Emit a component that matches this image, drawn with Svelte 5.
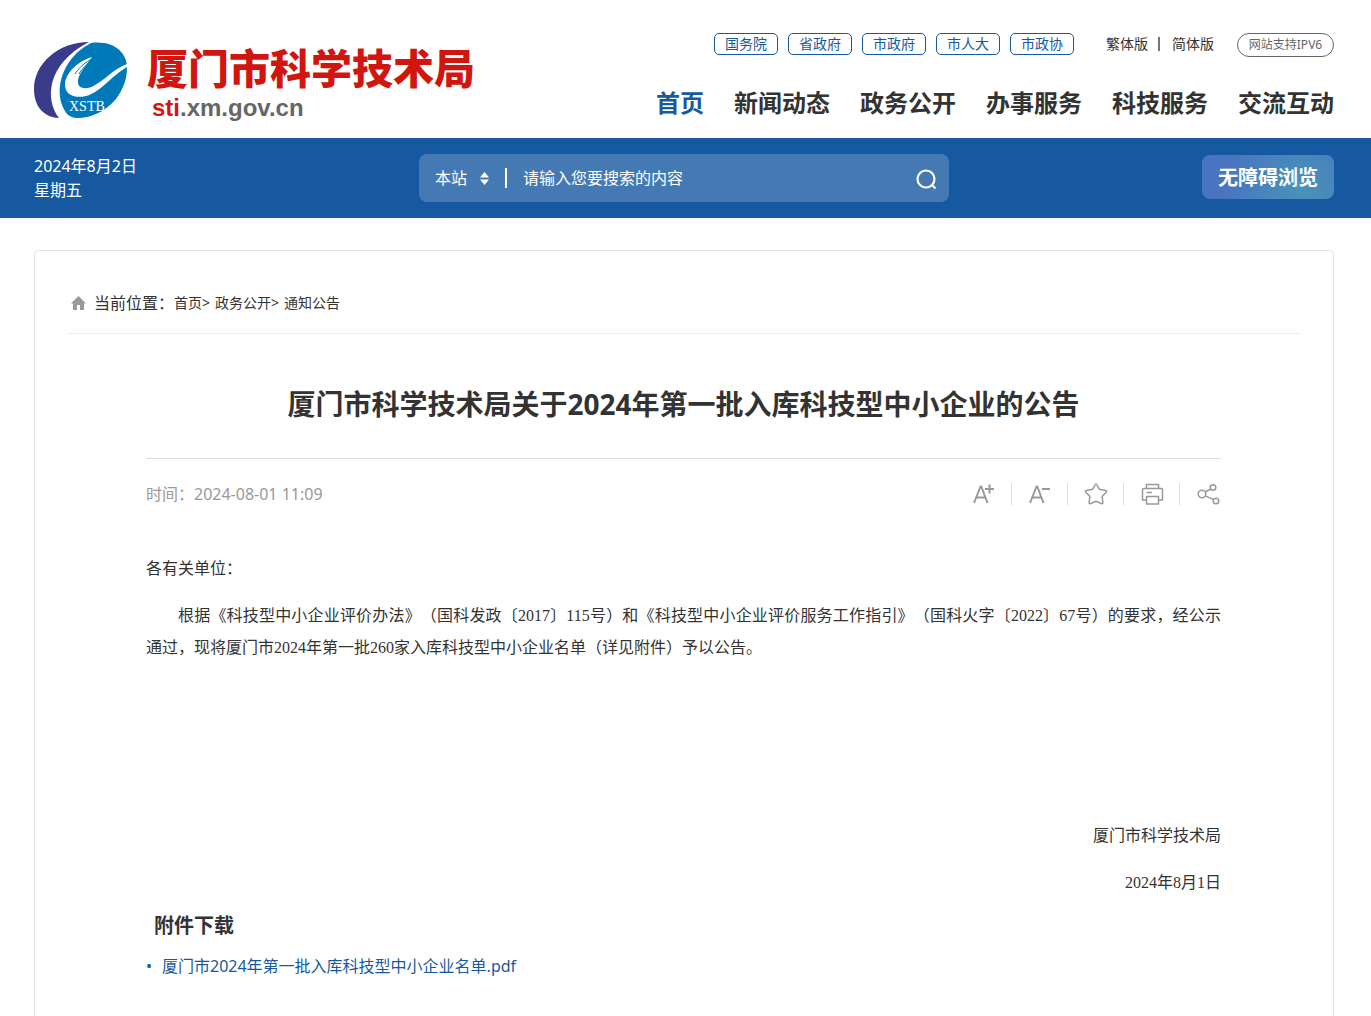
<script>
  const topLinks = ['国务院', '省政府', '市政府', '市人大', '市政协']
  const nav = ['首页', '新闻动态', '政务公开', '办事服务', '科技服务', '交流互动']
  const crumbs = ['首页', '政务公开', '通知公告']

  let keyword = $state('')
</script>

<header class="wrap header">
  <a class="logo" href="#home">
    <svg width="94" height="78" viewBox="0 0 94 78" aria-hidden="true">
      <path fill="#3b3b8c" d="M55 0C24 0 0 22 0 47c0 17 9 28 25 29C11 58 12 22 55 0z" />
      <path fill="#0079b8" d="M57 1c22-3 36 9 36 25 0 26-22 50-50 50-4 0-8-2-10-4C18 53 26 17 57 1z" />
      <path fill="#fff" d="M58 15C42 20 31 32 31 43c0 9 9 14 21 11 15-4 24-19 41-29v-3C79 27 71 38 61 43c-8 5-16 4-17-2-1-7 6-15 14-26z" />
      <path stroke="#0079b8" stroke-width="1" fill="none" d="M56 18C49 22 44 27 41 32M55 21C50 25 47 28 45 32" />
      <text x="35" y="69">XSTB</text>
    </svg>
    <span class="logo-text">
      <strong>厦门市科学技术局</strong>
      <em><b>sti</b>.xm.gov.cn</em>
    </span>
  </a>

  <div class="header-right">
    <div class="top">
      {#each topLinks as item}
        <a class="tag" href="#gov">{item}</a>
      {/each}
      <div class="lang">
        <a href="#hant">繁体版</a>
        <i></i>
        <a href="#hans">简体版</a>
      </div>
      <a class="ipv6" href="#ipv6">网站支持IPV6</a>
    </div>
    <nav>
      {#each nav as item, i}
        <a class:on={i === 0} href="#nav">{item}</a>
      {/each}
    </nav>
  </div>
</header>

<div class="bar">
  <div class="wrap bar-in">
    <p class="date">2024年8月2日<br />星期五</p>
    <form class="search" onsubmit={(e) => e.preventDefault()}>
      <select aria-label="搜索范围">
        <option>本站</option>
      </select>
      <svg class="arrows" width="9" height="13" viewBox="0 0 9 13" aria-hidden="true">
        <path fill="#fff" d="M4.5 0L9 5.500H0zM4.500 13L9 7.500H0z" />
      </svg>
      <i></i>
      <input type="text" aria-label="搜索" placeholder="请输入您要搜索的内容" bind:value={keyword} />
      <button aria-label="搜索">
        <svg width="22" height="24" viewBox="0 0 22 24" fill="none" stroke="#fff" stroke-width="2.2">
          <circle cx="11" cy="13" r="8.500" />
          <path d="M16.500 18.500l4 4" />
        </svg>
      </button>
    </form>
    <button class="barrier">无障碍浏览</button>
  </div>
</div>

<div class="wrap">
  <main class="card">
    <div class="crumbs">
      <svg width="15" height="14" viewBox="0 0 15 14" aria-hidden="true">
        <path fill="#999" d="M7.5 0L15 7.500h-2V14H9V9H6v5H2V7.500H0z" />
      </svg>
      <span>当前位置：</span>
      <p>
        {#each crumbs as item, i}
          <span><a href="#crumb">{item}</a>{i < crumbs.length - 1 ? '>' : ''}</span>
        {/each}
      </p>
    </div>

    <article>
      <h1>厦门市科学技术局关于2024年第一批入库科技型中小企业的公告</h1>
      <div class="meta">
        <span>时间：2024-08-01 11:09</span>
        <div class="tools">
          <button aria-label="放大字体">
            <svg viewBox="0 0 24 22"><path class="thick" d="M2 20L8.500 3.500h.8L15.500 20M4.500 14.500H13M13 6h9M17.500 1.500v9" /></svg>
          </button>
          <button aria-label="缩小字体">
            <svg viewBox="0 0 24 22"><path class="thick" d="M2 20L8.500 3.500h.8L15.500 20M4.500 14.500H13M14 6h8" /></svg>
          </button>
          <button aria-label="收藏">
            <svg viewBox="0 0 24 22"><path d="M12 1c.5 0 1 .6 3.300 5.300l6.500 1.200c1 .2 1 .9.500 1.500l-4.200 4.500.8 6.300c0 .8-.6 1.100-1.300.8L12 18.200l-5.600 2.400c-.7.300-1.300 0-1.300-.8l.8-6.300L1.700 9c-.5-.6-.5-1.300.5-1.500l6.500-1.200C11 1.600 11.500 1 12 1z" /></svg>
          </button>
          <button aria-label="打印">
            <svg viewBox="0 0 24 22"><path d="M6.500 5.500V1.500h12v4M6.500 17H2.500V7q0-1.500 1.500-1.500h17q1.500 0 1.500 1.500v10h-4M6.500 13.500h12V21h-12zM6.500 9.500H12" /></svg>
          </button>
          <button aria-label="分享">
            <svg viewBox="0 0 24 22"><circle cx="6" cy="11" r="3.800" /><circle cx="17" cy="4.500" r="2.800" /><circle cx="20" cy="18" r="2.800" /><path d="M9.300 9L14.500 6M9.500 12.800l8 3.900" /></svg>
          </button>
        </div>
      </div>

      <div class="text">
        <p>各有关单位：</p>
        <p class="indent">根据《科技型中小企业评价办法》（国科发政〔2017〕115号）和《科技型中小企业评价服务工作指引》（国科火字〔2022〕67号）的要求，经公示通过，现将厦门市2024年第一批260家入库科技型中小企业名单（详见附件）予以公告。</p>
        <div class="sign">
          <p>厦门市科学技术局</p>
          <p>2024年8月1日</p>
        </div>
      </div>

      <h2>附件下载</h2>
      <ul>
        <li><a href="#pdf">厦门市2024年第一批入库科技型中小企业名单.pdf</a></li>
      </ul>
    </article>
  </main>
</div>

<style>
  :global(body) {
    margin: 0;
    background: #fff;
    color: #333;
    font-family: "Noto Sans", "Noto Sans CJK SC", sans-serif;
    font-size: 16px;
    line-height: 24px;
  }
  a {
    color: inherit;
    text-decoration: none;
  }
  p, h1, h2, ul {
    margin: 0;
    padding: 0;
  }
  button, input, select {
    font: inherit;
    color: inherit;
    background: none;
    border: 0;
    padding: 0;
    margin: 0;
  }
  button {
    cursor: pointer;
  }

  .wrap {
    max-width: 1300px;
    margin: 0 auto;
    padding: 0 37px 0 34px;
  }
  .header {
    display: flex;
    justify-content: space-between;
    height: 138px;
  }
  .logo {
    display: flex;
    gap: 19px;
    padding-top: 42px;
  }
  .logo text {
    fill: #fff;
    font: 14px "Liberation Serif", serif;
  }
  .logo-text {
    display: flex;
    flex-direction: column;
  }
  .logo-text strong {
    color: #d1160f;
    font-size: 41px;
    font-weight: 900;
    line-height: 52px;
  }
  .logo-text em {
    padding-left: 5px;
    color: #666;
    font: bold 24px/28px "Liberation Sans", sans-serif;
  }
  .logo-text b {
    color: #d1160f;
  }

  .header-right {
    display: flex;
    flex-direction: column;
    align-items: flex-end;
    padding-top: 33px;
  }
  .top {
    display: flex;
    gap: 10px;
    font-size: 14px;
    line-height: 20px;
  }
  .tag {
    box-sizing: border-box;
    width: 64px;
    height: 22px;
    border: 1px solid #1659a0;
    border-radius: 5px;
    color: #1659a0;
    text-align: center;
  }
  .lang {
    display: flex;
    align-items: center;
    height: 22px;
    margin: 0 13px 0 22px;
  }
  .lang i {
    width: 2px;
    height: 14px;
    margin: 0 12px 0 10px;
    background: #777;
  }
  .ipv6 {
    box-sizing: border-box;
    width: 97px;
    border: 1px solid #666;
    border-radius: 12px;
    color: #666;
    font-size: 12px;
    line-height: 22px;
    text-align: center;
  }
  nav {
    display: flex;
    gap: 30px;
    margin-top: 28px;
    font-size: 24px;
    font-weight: bold;
    line-height: 36px;
  }
  nav .on {
    color: #1659a0;
  }

  .bar {
    background: #1659a0;
    color: #fff;
  }
  .bar-in {
    display: grid;
    grid-template-columns: 1fr 530px 1fr;
    height: 80px;
  }
  .date {
    padding-top: 16px;
  }
  .search {
    display: flex;
    align-items: center;
    box-sizing: border-box;
    height: 48px;
    margin-top: 16px;
    padding: 0 12px 0 16px;
    border-radius: 8px;
    background: #4579b3;
  }
  .search select {
    appearance: none;
    width: 45px;
  }
  .search i {
    width: 2px;
    height: 20px;
    margin: 0 16px;
    background: #fff;
  }
  .search input {
    flex: 1;
    outline: 0;
  }
  .search input::placeholder {
    color: #fff;
    opacity: 1;
  }
  .search svg {
    display: block;
  }
  .barrier {
    justify-self: end;
    width: 132px;
    height: 44px;
    margin-top: 17px;
    padding-top: 2px;
    border-radius: 8px;
    background: radial-gradient(circle at 75% 80%, #4893b8, #4874c0 75%);
    font-size: 20px;
    font-weight: bold;
  }

  .card {
    margin-top: 32px;
    padding: 32px 32px 60px;
    border: 1px solid #e2e2e2;
    border-radius: 4px;
  }
  .crumbs {
    display: flex;
    align-items: center;
    height: 40px;
    padding: 0 0 10px 4px;
    border-bottom: 1px solid #eee;
  }
  .crumbs > span {
    padding-left: 8px;
  }
  .crumbs p {
    display: flex;
    gap: 5px;
    font-size: 14px;
  }

  article {
    padding: 0 80px 0 79px;
  }
  h1 {
    padding: 48px 0 32px;
    border-bottom: 1px solid #ddd;
    font-size: 28px;
    line-height: 44px;
    text-align: center;
  }
  .meta {
    display: flex;
    align-items: center;
    justify-content: space-between;
    height: 70px;
    color: #999;
  }
  .tools {
    display: flex;
    margin-right: 1px;
  }
  .tools button + button {
    margin-left: 15px;
    padding-left: 16px;
    border-left: 1px solid #ddd;
  }
  .tools svg {
    display: block;
    width: 24px;
    height: 22px;
    fill: none;
    stroke: #999;
    stroke-width: 1.5;
    stroke-linejoin: round;
  }
  .tools .thick {
    stroke-width: 2;
  }

  .text {
    padding-top: 24px;
    font-family: "Liberation Serif", "Noto Sans CJK SC", serif;
    line-height: 32px;
    text-align: justify;
    text-spacing-trim: space-all;
  }
  .text p {
    margin-bottom: 15px;
  }
  .indent {
    text-indent: 32px;
  }
  .sign {
    padding-top: 141px;
    text-align: right;
  }
  h2 {
    padding-left: 8px;
    font-size: 20px;
    line-height: 24px;
  }
  ul {
    margin-top: 16px;
    list-style: none;
    color: #1659a0;
  }
  li {
    display: flex;
  }
  li::before {
    content: "•";
    width: 16px;
  }
</style>
